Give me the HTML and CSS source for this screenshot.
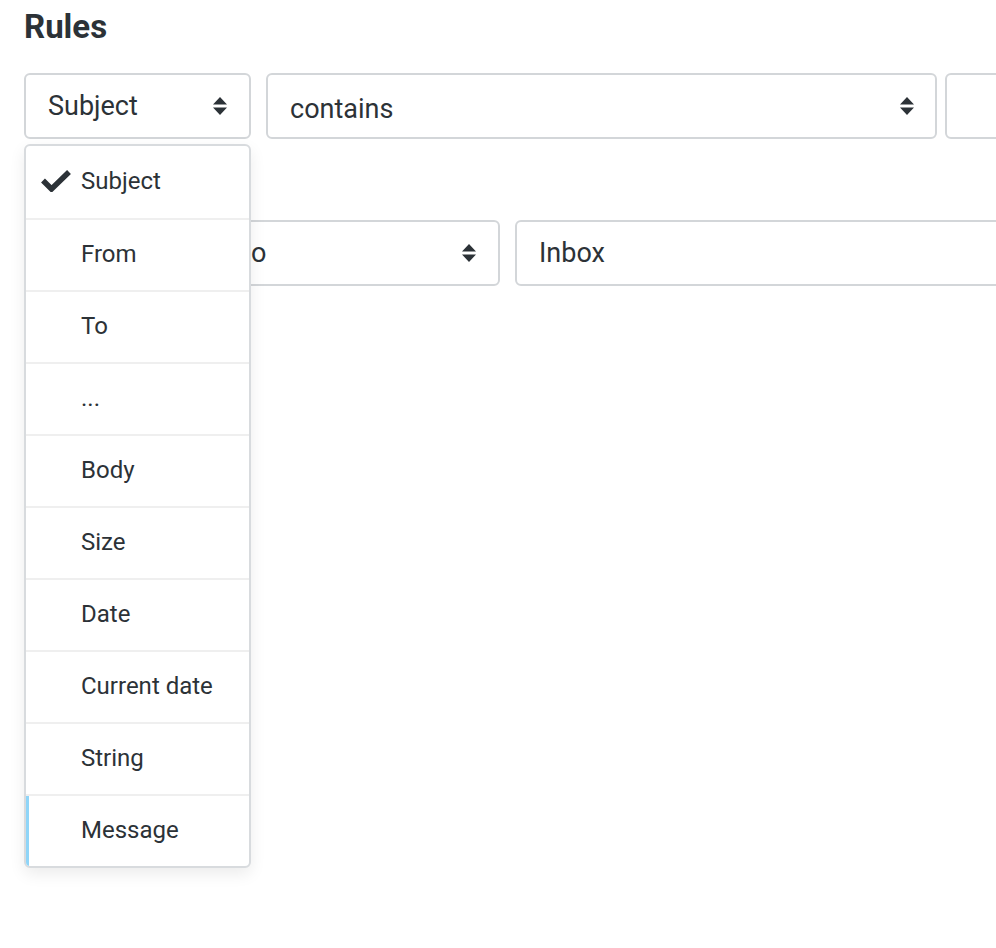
FILE: index.html
```html
<!DOCTYPE html>
<html lang="en">
<head>
<meta charset="UTF-8">
<meta name="viewport" content="width=device-width, initial-scale=1.0">
<title>Filters - Rules</title>
<link rel="stylesheet" href="styles.css">
</head>
<body>
<div class="page">
    <h1>Rules</h1>

    <div class="rule-row">
        <div class="field field-header">
            <div class="select">
                <span>Subject</span>
                <svg class="arrows" viewBox="0 0 14 18"><path d="M7 0 L14 7.5 L0 7.5 Z M0 10.5 L14 10.5 L7 18 Z"/></svg>
            </div>
            <ul class="menu">
                <li class="selected">
                    <svg class="check" viewBox="0 0 30 22"><path d="M2 10.5 L10.5 19 L28 2"/></svg>
                    Subject
                </li>
                <li>From</li>
                <li>To</li>
                <li>...</li>
                <li>Body</li>
                <li>Size</li>
                <li>Date</li>
                <li>Current date</li>
                <li>String</li>
                <li class="focused">Message</li>
            </ul>
        </div>
        <div class="field-group">
            <div class="select field-op">
                <span>contains</span>
                <svg class="arrows" viewBox="0 0 14 18"><path d="M7 0 L14 7.5 L0 7.5 Z M0 10.5 L14 10.5 L7 18 Z"/></svg>
            </div>
            <input class="text-input field-value" type="text">
        </div>
    </div>

    <div class="rule-row actions">
        <div class="select field-action">
            <span>Move message to</span>
            <svg class="arrows" viewBox="0 0 14 18"><path d="M7 0 L14 7.5 L0 7.5 Z M0 10.5 L14 10.5 L7 18 Z"/></svg>
        </div>
        <div class="select field-folder">
            <span>Inbox</span>
        </div>
    </div>
</div>
</body>
</html>
```

FILE: styles.css
```css
* {
    margin: 0;
    padding: 0;
    box-sizing: border-box;
    font-family: Roboto, 'Liberation Sans', sans-serif;
}
body {
    background-color: #ffffff;
    color: #2c3237;
}
.page {
    min-height: 100vh;
    padding: 10px 24px;
    overflow: hidden;
}
h1 {
    font-size: 33px;
    font-weight: 700;
    line-height: 34px;
    margin-bottom: 29px;
}
.rule-row {
    display: flex;
    gap: 15px;
}
.rule-row.actions {
    margin-top: 81px;
}
.field {
    position: relative;
}
.select {
    flex-shrink: 0;
    display: flex;
    align-items: center;
    justify-content: space-between;
    height: 66px;
    padding: 0 22px;
    border: 2px solid #d3d6d9;
    border-radius: 6px;
    background: #ffffff;
    font-size: 27px;
}
.arrows {
    width: 14px;
    height: 18px;
    fill: #2c3237;
}
.field-header .select {
    width: 227px;
}
.field-group {
    display: flex;
    gap: 8px;
}
.field-op {
    width: 671px;
    padding-right: 21px;
}
.field-op span {
    margin-top: 5px;
}
.text-input {
    flex-shrink: 0;
    width: 300px;
    height: 66px;
    border: 2px solid #d3d6d9;
    border-radius: 6px;
}
.field-action {
    width: 476px;
    padding-left: 27px;
}
.field-folder {
    width: 600px;
}

/* dropdown list for the header field */
.menu {
    position: absolute;
    top: 71px;
    left: 0;
    z-index: 10;
    width: 227px;
    list-style: none;
    background: #ffffff;
    border: 2px solid #d8dbde;
    border-radius: 6px;
    box-shadow: 0 6px 16px rgba(0, 0, 0, 0.08);
    overflow: hidden;
}
.menu li {
    position: relative;
    height: 72px;
    line-height: 68px;
    padding-left: 55px;
    font-size: 24px;
    border-top: 2px solid #efefef;
}
.menu li:first-child {
    border-top: none;
    line-height: 70px;
}
.menu li.focused {
    box-shadow: inset 3px 0 0 #8fd5f8;
}
.check {
    position: absolute;
    left: 15px;
    top: 24px;
    width: 30px;
    height: 22px;
    fill: none;
    stroke: #2c3237;
    stroke-width: 5.5;
}
```
